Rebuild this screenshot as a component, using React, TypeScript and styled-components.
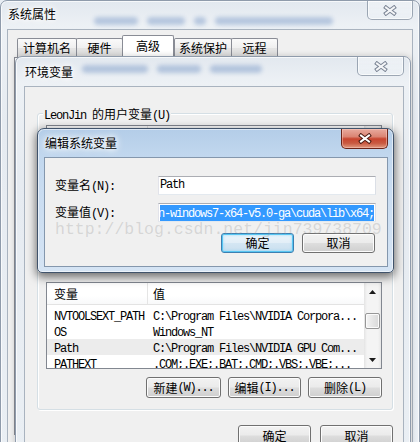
import React from "react";
import styled, { createGlobalStyle, css } from "styled-components";

const GlobalStyle = createGlobalStyle`
  html, body { margin: 0; padding: 0; background: #e8edf3; }
  body { font-family: "Noto Sans CJK SC", "Noto Sans", sans-serif; }
  *, *::before, *::after { box-sizing: border-box; }
`;

const HAN_RE = /([\u2E80-\u9FFF\uF900-\uFAFF\uFF00-\uFFEF]+)/;

const Han = styled.span`
  font-family: "Noto Sans CJK SC", "Noto Sans CJK JP", sans-serif;
  font-size: 12px;
`;
const Lat = styled.span`
  font-family: "Liberation Mono", "DejaVu Sans Mono", monospace;
  font-size: 12px;
  letter-spacing: -1.2px;
`;

const Mix = ({ text }: { text: string }) => (
  <>
    {text
      .split(HAN_RE)
      .filter(Boolean)
      .map((part, i) =>
        HAN_RE.test(part) ? <Han key={i}>{part}</Han> : <Lat key={i}>{part}</Lat>
      )}
  </>
);

const Screen = styled.div`
  position: relative;
  width: 420px;
  height: 442px;
  overflow: hidden;
  background: #e8edf3;
  color: #000;
  font-family: "Noto Sans CJK SC", "Noto Sans", sans-serif;
  font-size: 12px;
`;

const glassInactive = css`
  background: linear-gradient(180deg, #e2e8ef 0px, #edf1f5 26px, #e6ebf1 120px, #eaeff4 100%);
`;
const glassActive = css`
  background: linear-gradient(180deg, #b4cde8 0px, #c1d7ee 26px, #c9dcf1 60px, #d5e4f4 100%);
`;

const Frame = styled.div<{ $active?: boolean }>`
  display: flex;
  flex-direction: column;
  border: 1px solid ${(p) => (p.$active ? "#40536b" : "#8f9bab")};
  border-radius: 7px 7px 5px 5px;
  box-shadow: inset 0 0 0 1px rgba(255, 255, 255, 0.7);
  ${(p) => (p.$active ? glassActive : glassInactive)};
`;

const OuterFrame = styled(Frame)`
  width: 420px;
  height: 470px;
  padding: 0 6px;
`;

const EnvFrame = styled(Frame)`
  position: absolute;
  left: 15px;
  top: 56px;
  width: 396px;
  height: 420px;
  padding: 0 6px 0 8px;
  box-shadow: inset 0 0 0 1px rgba(255, 255, 255, 0.7), 0 0 6px rgba(0, 0, 0, 0.18);
  z-index: 1;
`;

const EditFrame = styled(Frame)`
  position: absolute;
  left: 37px;
  top: 128px;
  width: 357px;
  height: 145px;
  padding: 0 5px 5px 6px;
  box-shadow: inset 0 0 0 1px rgba(255, 255, 255, 0.55), 0 3px 10px 1px rgba(0, 0, 0, 0.55);
  z-index: 2;
`;

const TitleBar = styled.div<{ $h: number }>`
  display: flex;
  align-items: flex-start;
  flex-shrink: 0;
  height: ${(p) => p.$h}px;
`;

const Caption = styled.div<{ $lh: number }>`
  padding-left: 1px;
  line-height: ${(p) => p.$lh}px;
  white-space: nowrap;
  font-size: 12px;
  text-shadow: 0 0 4px #fff, 0 0 8px #fff, 0 0 10px rgba(255, 255, 255, 0.9);
`;

const Haze = styled.div<{ $ml: number; $mt: number }>`
  display: flex;
  gap: 9px;
  margin: ${(p) => p.$mt}px 0 0 ${(p) => p.$ml}px;
  filter: blur(2.2px);
  opacity: 0.28;
`;

const Blob = styled.span<{ $w: number }>`
  display: block;
  width: ${(p) => p.$w}px;
  height: 8px;
  border-radius: 4px;
  background: #2f5fa8;
`;

const CloseBtn = styled.div<{ $active?: boolean; $w: number; $h: number }>`
  margin-left: auto;
  flex-shrink: 0;
  width: ${(p) => p.$w}px;
  height: ${(p) => p.$h}px;
  display: flex;
  align-items: center;
  justify-content: center;
  border: 1px solid;
  border-top: none;
  border-radius: 0 0 5px 5px;
  ${(p) =>
    p.$active
      ? css`
          border-color: #6b2419;
          background: linear-gradient(180deg, #e8aa9e 0%, #db8574 40%, #c8452f 52%, #c95a42 75%, #e09a80 100%);
          box-shadow: inset 0 0 0 1px rgba(255, 210, 200, 0.45);
        `
      : css`
          border-color: rgba(100, 115, 135, 0.6);
          background: linear-gradient(180deg, rgba(255, 255, 255, 0.35), rgba(235, 240, 245, 0.75));
          box-shadow: inset 0 0 0 1px rgba(255, 255, 255, 0.6);
        `}
`;

const XGlyph = ({ active }: { active?: boolean }) => (
  <svg width="14" height="11" viewBox="0 0 14 11">
    <path
      d="M3 2.5 L11 8.5 M11 2.5 L3 8.5"
      stroke={active ? "#4a1a12" : "#7a8494"}
      strokeWidth="4"
      strokeLinecap="square"
      fill="none"
    />
    <path
      d="M3 2.5 L11 8.5 M11 2.5 L3 8.5"
      stroke={active ? "#ffffff" : "#f4f5f7"}
      strokeWidth="2"
      strokeLinecap="square"
      fill="none"
    />
  </svg>
);

/* ---------- outer window ---------- */

const OuterClient = styled.div`
  flex: 1;
  display: flex;
  flex-direction: column;
  background: #f0f0f0;
  border: 1px solid #a9b3bf;
  border-bottom: none;
  padding: 5px 6px 0 6px;
`;

const TabStrip = styled.div`
  display: flex;
  align-items: flex-end;
  height: 22px;
  padding-left: 3px;
`;

const Tab = styled.div<{ $w: number; $selected?: boolean }>`
  width: ${(p) => p.$w}px;
  height: 19px;
  margin-right: -1px;
  flex-shrink: 0;
  display: flex;
  align-items: center;
  justify-content: center;
  border: 1px solid #898c95;
  border-bottom: none;
  border-radius: 2px 2px 0 0;
  background: linear-gradient(180deg, #fafafa 0%, #efefef 50%, #e4e4e4 51%, #dcdcdc 100%);
  line-height: 14px;
  white-space: nowrap;
  ${(p) =>
    p.$selected &&
    css`
      height: 23px;
      margin-bottom: -1px;
      margin-right: 0;
      padding-bottom: 3px;
      background: #ffffff;
      position: relative;
      z-index: 1;
    `}
`;

const TabPanel = styled.div`
  height: 378px;
  border: 1px solid #898c95;
  background: #ffffff;
`;

/* ---------- environment dialog ---------- */

const EnvClient = styled.div`
  flex: 1;
  display: flex;
  flex-direction: column;
  background: #f0f0f0;
  border: 1px solid #a9b3bf;
  border-bottom: none;
  padding: 26px 10px 0 12px;
`;

const Group = styled.div<{ $mt?: number }>`
  display: flex;
  flex-direction: column;
  margin-top: ${(p) => p.$mt ?? 0}px;
  padding: 0 10px 11px 8px;
  border: 1px solid #d5dfe5;
  border-radius: 3px;
  box-shadow: inset 1px 1px 0 #fff, 1px 1px 0 #fff;
`;

const GroupLabel = styled.div`
  align-self: flex-start;
  margin: -7px 0 0 -3px;
  padding: 0 1px;
  height: 13px;
  line-height: 13px;
  background: #f0f0f0;
  white-space: nowrap;
`;

const ListBox = styled.div<{ $h: number; $mt: number }>`
  display: flex;
  flex-shrink: 0;
  height: ${(p) => p.$h}px;
  margin-top: ${(p) => p.$mt}px;
  border: 1px solid #828790;
  background: #ffffff;
  overflow: hidden;
`;

const ListMain = styled.div`
  flex: 1;
  min-width: 0;
  display: flex;
  flex-direction: column;
`;

const ListHeader = styled.div`
  display: grid;
  grid-template-columns: 101px 1fr;
  height: 22px;
  flex-shrink: 0;
  border-bottom: 1px solid #e3e3e3;
  background: linear-gradient(180deg, #ffffff 0%, #ffffff 60%, #f8f9fa 100%);
`;

const HeadCell = styled.div<{ $pl: number; $sep?: boolean }>`
  padding-left: ${(p) => p.$pl}px;
  line-height: 21px;
  white-space: nowrap;
  ${(p) => p.$sep && "border-right: 1px solid #e5e5e5;"}
`;

const Rows = styled.div`
  padding-top: 2px;
`;

const Row = styled.div<{ $hl?: boolean }>`
  display: grid;
  grid-template-columns: 101px 1fr;
  height: 16px;
  line-height: 16px;
  white-space: nowrap;
  background: ${(p) => (p.$hl ? "#ececec" : "transparent")};
`;

const Cell = styled.div<{ $pl: number }>`
  padding-left: ${(p) => p.$pl}px;
  overflow: hidden;
`;

const ScrollBar = styled.div`
  width: 17px;
  flex-shrink: 0;
  display: flex;
  flex-direction: column;
  background: linear-gradient(90deg, #e4e4e4 0%, #f4f4f4 18%, #f4f4f4 82%, #e6e6e6 100%);
`;

const ScrollArrow = styled.div`
  height: 17px;
  flex-shrink: 0;
  display: flex;
  align-items: center;
  justify-content: center;
`;

const ScrollTrack = styled.div`
  flex: 1;
  padding-top: 13px;
`;

const Thumb = styled.div`
  height: 16px;
  margin: 0 1px;
  border: 1px solid #979797;
  border-radius: 2px;
  background: linear-gradient(90deg, #f5f5f5, #e6e6e6 50%, #d9d9d9);
  box-shadow: inset 0 0 0 1px #fbfbfb;
`;

const Arrow = ({ down }: { down?: boolean }) => (
  <svg width="7" height="4" viewBox="0 0 7 4">
    <path d={down ? "M0 0 H7 L3.5 4 Z" : "M0 4 H7 L3.5 0 Z"} fill="#1a1a1a" />
  </svg>
);

const ButtonRow = styled.div<{ $mt: number; $gap: number }>`
  display: flex;
  justify-content: flex-end;
  flex-shrink: 0;
  gap: ${(p) => p.$gap}px;
  margin-top: ${(p) => p.$mt}px;
`;

const Button = styled.div<{ $w: number; $h?: number; $default?: boolean }>`
  width: ${(p) => p.$w}px;
  height: ${(p) => p.$h ?? 21}px;
  flex-shrink: 0;
  display: flex;
  align-items: center;
  justify-content: center;
  border: 1px solid #707070;
  border-radius: 3px;
  background: linear-gradient(180deg, #f2f2f2 0%, #ebebeb 48%, #dddddd 52%, #cfcfcf 100%);
  box-shadow: inset 0 0 0 1px #fcfcfc;
  line-height: 14px;
  white-space: nowrap;
  ${(p) =>
    p.$default &&
    css`
      border-color: #3c7fb1;
      background: linear-gradient(180deg, #eef6fb 0%, #e2eef7 48%, #d4e6f3 52%, #c9dfee 100%);
      box-shadow: inset 0 0 0 1px #58c6f2, inset 0 0 2px 2px rgba(120, 210, 250, 0.35);
    `}
`;

/* ---------- edit dialog ---------- */

const EditClient = styled.div`
  flex: 1;
  background: #f0f0f0;
  border: 1px solid #8497ad;
  padding: 18px 12px 0 10px;
`;

const FormGrid = styled.div`
  display: grid;
  grid-template-columns: 103px 218px;
  grid-auto-rows: 19px;
  row-gap: 8px;
  align-items: center;
`;

const FieldLabel = styled.div`
  line-height: 14px;
  white-space: nowrap;
`;

const TextBox = styled.div`
  height: 19px;
  display: flex;
  align-items: center;
  padding: 0 1px;
  background: #ffffff;
  border: 1px solid;
  border-color: #abadb3 #dbdfe6 #e3e9ef #e2e3ea;
  overflow: hidden;
  white-space: nowrap;
  line-height: 13px;
`;

const ScrolledEnd = styled.div`
  flex: 1;
  min-width: 0;
  display: flex;
  justify-content: flex-end;
  overflow: hidden;
`;

const Selection = styled.span`
  flex-shrink: 0;
  background: #3399ff;
  color: #ffffff;
  line-height: 13px;
  white-space: nowrap;
`;

const Watermark = styled.div`
  position: absolute;
  left: 55px;
  top: 222px;
  z-index: 5;
  font-family: "Liberation Mono", "DejaVu Sans Mono", monospace;
  font-size: 16.5px;
  line-height: 16.5px;
  color: rgba(150, 150, 150, 0.3);
  white-space: nowrap;
  pointer-events: none;
`;

const sysVars: { name: string; value: string; hl?: boolean }[] = [
  { name: "NVTOOLSEXT_PATH", value: "C:\\Program Files\\NVIDIA Corpora..." },
  { name: "OS", value: "Windows_NT" },
  { name: "Path", value: "C:\\Program Files\\NVIDIA GPU Com...", hl: true },
  { name: "PATHEXT", value: ".COM;.EXE;.BAT;.CMD;.VBS;.VBE;..." },
];

const userVars: { name: string; value: string }[] = [
  { name: "TEMP", value: "%USERPROFILE%\\AppData\\Local\\Temp" },
  { name: "TMP", value: "%USERPROFILE%\\AppData\\Local\\Temp" },
];

const pathValue =
  "C:\\Program Files\\NVIDIA GPU Computing Toolkit\\CUDA\\v8.0\\bin;D:\\cudnn-windows7-x64-v5.0-ga\\cuda\\lib\\x64;";

const VarList = ({
  rows,
  h,
  mt,
}: {
  rows: { name: string; value: string; hl?: boolean }[];
  h: number;
  mt: number;
}) => (
  <ListBox $h={h} $mt={mt}>
    <ListMain>
      <ListHeader>
        <HeadCell $pl={7} $sep>
          <Mix text="变量" />
        </HeadCell>
        <HeadCell $pl={5}>
          <Mix text="值" />
        </HeadCell>
      </ListHeader>
      <Rows>
        {rows.map((r) => (
          <Row key={r.name} $hl={r.hl}>
            <Cell $pl={7}>
              <Mix text={r.name} />
            </Cell>
            <Cell $pl={5}>
              <Mix text={r.value} />
            </Cell>
          </Row>
        ))}
      </Rows>
    </ListMain>
    <ScrollBar>
      <ScrollArrow>
        <Arrow />
      </ScrollArrow>
      <ScrollTrack>
        <Thumb />
      </ScrollTrack>
      <ScrollArrow>
        <Arrow down />
      </ScrollArrow>
    </ScrollBar>
  </ListBox>
);

export default function App() {
  return (
    <Screen>
      <GlobalStyle />

      <OuterFrame>
        <TitleBar $h={28}>
          <Caption $lh={26}>系统属性</Caption>
          <Haze $ml={38} $mt={16}>
            <Blob $w={44} />
            <Blob $w={38} />
            <Blob $w={12} />
            <Blob $w={118} />
          </Haze>
          <CloseBtn $w={46} $h={19}>
            <XGlyph />
          </CloseBtn>
        </TitleBar>
        <OuterClient>
          <TabStrip>
            <Tab $w={60}>计算机名</Tab>
            <Tab $w={47}>硬件</Tab>
            <Tab $w={52} $selected>
              高级
            </Tab>
            <Tab $w={58}>系统保护</Tab>
            <Tab $w={47}>远程</Tab>
          </TabStrip>
          <TabPanel />
        </OuterClient>
      </OuterFrame>

      <EnvFrame>
        <TitleBar $h={29}>
          <Caption $lh={29}>环境变量</Caption>
          <Haze $ml={9} $mt={8}>
            <Blob $w={66} />
            <Blob $w={44} />
            <Blob $w={52} />
          </Haze>
          <CloseBtn $w={47} $h={19}>
            <XGlyph />
          </CloseBtn>
        </TitleBar>
        <EnvClient>
          <Group>
            <GroupLabel>
              <Mix text="LeonJin 的用户变量(U)" />
            </GroupLabel>
            <VarList rows={userVars} h={87} mt={5} />
            <ButtonRow $mt={9} $gap={7}>
              <Button $w={75}>
                <Mix text="新建(N)..." />
              </Button>
              <Button $w={73}>
                <Mix text="编辑(E)..." />
              </Button>
              <Button $w={74}>
                <Mix text="删除(D)" />
              </Button>
            </ButtonRow>
          </Group>

          <Group $mt={9}>
            <GroupLabel>
              <Mix text="系统变量(S)" />
            </GroupLabel>
            <VarList rows={sysVars} h={87} mt={12} />
            <ButtonRow $mt={8} $gap={7}>
              <Button $w={75}>
                <Mix text="新建(W)..." />
              </Button>
              <Button $w={73}>
                <Mix text="编辑(I)..." />
              </Button>
              <Button $w={74}>
                <Mix text="删除(L)" />
              </Button>
            </ButtonRow>
          </Group>

          <ButtonRow $mt={15} $gap={9}>
            <Button $w={73}>确定</Button>
            <Button $w={73}>取消</Button>
          </ButtonRow>
        </EnvClient>
      </EnvFrame>

      <EditFrame $active>
        <TitleBar $h={28}>
          <Caption $lh={28}>编辑系统变量</Caption>
          <CloseBtn $active $w={47} $h={20}>
            <XGlyph active />
          </CloseBtn>
        </TitleBar>
        <EditClient>
          <FormGrid>
            <FieldLabel>
              <Mix text="变量名(N):" />
            </FieldLabel>
            <TextBox>
              <Mix text="Path" />
            </TextBox>
            <FieldLabel>
              <Mix text="变量值(V):" />
            </FieldLabel>
            <TextBox>
              <ScrolledEnd>
                <Selection>
                  <Mix text={pathValue} />
                </Selection>
              </ScrolledEnd>
            </TextBox>
          </FormGrid>
          <ButtonRow $mt={11} $gap={8}>
            <Button $w={73} $h={20} $default>
              确定
            </Button>
            <Button $w={73} $h={20}>
              取消
            </Button>
          </ButtonRow>
        </EditClient>
      </EditFrame>

      <Watermark>http://blog.csdn.net/jin739738709</Watermark>
    </Screen>
  );
}
